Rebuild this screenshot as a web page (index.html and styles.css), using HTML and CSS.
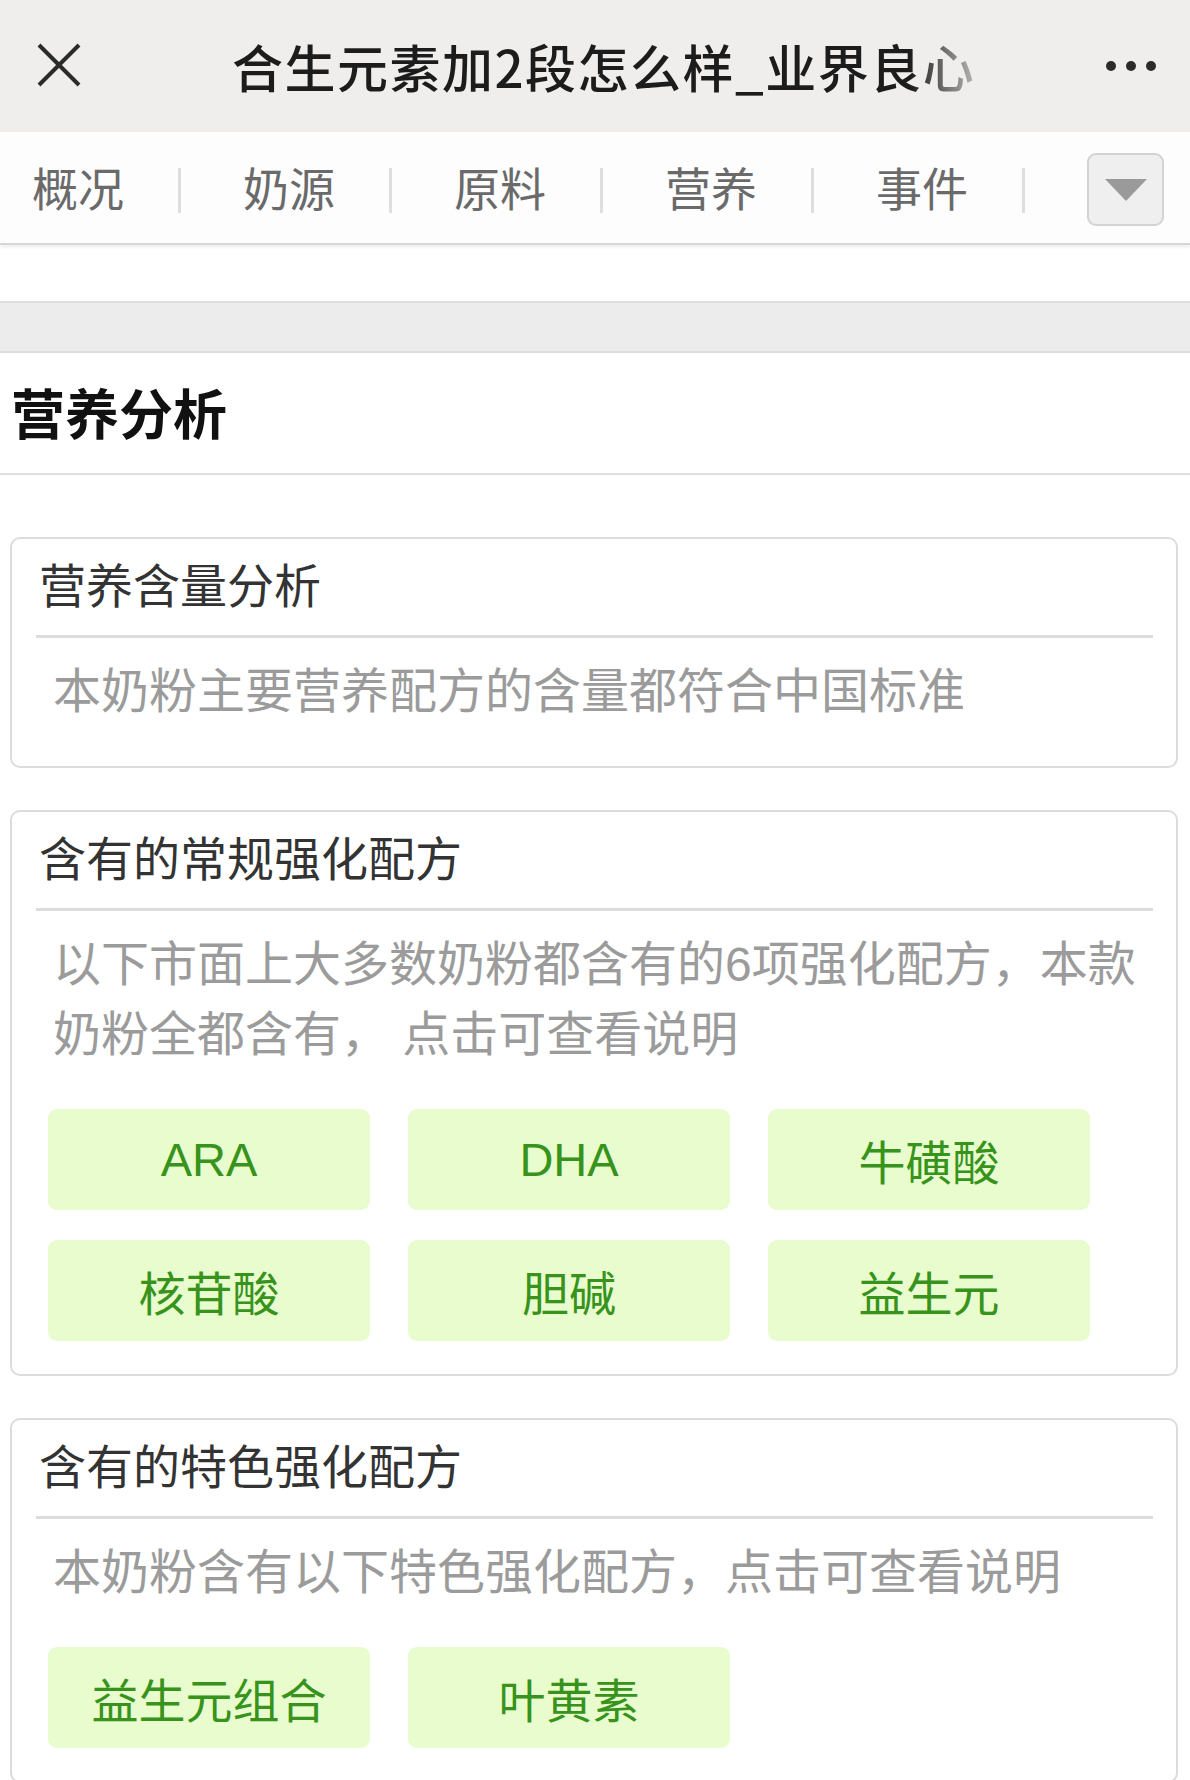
FILE: index.html
```html
<!DOCTYPE html>
<html lang="zh-CN">
<head>
<meta charset="utf-8">
<title>合生元素加2段怎么样</title>
<link rel="stylesheet" href="styles.css">
</head>
<body>
<header class="topbar">
  <div class="close">
    <svg width="44" height="44" viewBox="0 0 44 44"><path d="M2 2 L42 42 M42 2 L2 42" stroke="#2b2b2b" stroke-width="4" fill="none"/></svg>
  </div>
  <div class="title">合生元素加2段怎么样_业界良心</div>
  <div class="more">
    <svg width="52" height="12" viewBox="0 0 52 12"><circle cx="6" cy="6" r="5" fill="#2b2b2b"/><circle cx="26" cy="6" r="5" fill="#2b2b2b"/><circle cx="46" cy="6" r="5" fill="#2b2b2b"/></svg>
  </div>
</header>

<nav class="tabs">
  <div class="tab"><span class="tab-text">概况</span><span class="sep"></span></div>
  <div class="tab"><span class="tab-text">奶源</span><span class="sep"></span></div>
  <div class="tab"><span class="tab-text">原料</span><span class="sep"></span></div>
  <div class="tab"><span class="tab-text">营养</span><span class="sep"></span></div>
  <div class="tab"><span class="tab-text">事件</span><span class="sep"></span></div>
  <div class="drop">
    <svg width="42" height="22" viewBox="0 0 42 22"><path d="M0 0 H42 L21 22 Z" fill="#9a9a9a"/></svg>
  </div>
</nav>

<div class="spacer"></div>
<div class="band"></div>

<h2 class="section-title">营养分析</h2>

<main class="cards">
  <section class="card">
    <h3 class="card-title">营养含量分析</h3>
    <p class="card-desc">本奶粉主要营养配方的含量都符合中国标准</p>
  </section>

  <section class="card">
    <h3 class="card-title">含有的常规强化配方</h3>
    <p class="card-desc">以下市面上大多数奶粉都含有的6项强化配方，本款奶粉全都含有， 点击可查看说明</p>
    <div class="chips">
      <div class="chip">ARA</div>
      <div class="chip">DHA</div>
      <div class="chip">牛磺酸</div>
      <div class="chip">核苷酸</div>
      <div class="chip">胆碱</div>
      <div class="chip">益生元</div>
    </div>
  </section>

  <section class="card">
    <h3 class="card-title">含有的特色强化配方</h3>
    <p class="card-desc">本奶粉含有以下特色强化配方，点击可查看说明</p>
    <div class="chips">
      <div class="chip">益生元组合</div>
      <div class="chip">叶黄素</div>
    </div>
  </section>
</main>
</body>
</html>
```

FILE: styles.css
```css
* { box-sizing: border-box; }
html, body {
  margin: 0;
  padding: 0;
  background: #ffffff;
  font-family: "Liberation Sans", "Noto Sans CJK SC", sans-serif;
}

.topbar {
  height: 132px;
  background: #efeeec;
  display: flex;
  align-items: center;
}
.close {
  width: 44px;
  height: 44px;
  margin-left: 37px;
  margin-top: -2px;
}
.close svg { display: block; }
.title {
  margin-left: 151px;
  width: 745px;
  white-space: nowrap;
  font-family: "Noto Sans CJK SC", sans-serif;
  font-size: 51px;
  font-weight: 500;
  letter-spacing: 1.5px;
  color: #1c1c1c;
  line-height: 60px;
  -webkit-mask-image: linear-gradient(to right, #000 91%, rgba(0,0,0,0.25) 100%);
  mask-image: linear-gradient(to right, #000 91%, rgba(0,0,0,0.25) 100%);
}
.more {
  margin-left: auto;
  margin-right: 33px;
  height: 12px;
}
.more svg { display: block; }

.tabs {
  height: 113px;
  background: #fdfdfd;
  display: flex;
  align-items: center;
  padding-left: 32px;
  border-bottom: 2px solid #d6d6d6;
  box-shadow: 0 2px 3px rgba(0,0,0,0.08);
  position: relative;
  z-index: 1;
}
.tab {
  display: flex;
  align-items: center;
  width: 211px;
}
.tab-text {
  font-family: "Noto Sans CJK SC", sans-serif;
  font-size: 46px;
  color: #6a6a6a;
  width: 93px;
  line-height: 56px;
  white-space: nowrap;
  margin-top: -4px;
}
.sep {
  width: 3px;
  height: 45px;
  background: #dedede;
  margin-left: 53px;
  margin-top: 6px;
}
.drop {
  width: 77px;
  height: 73px;
  border: 2px solid #d3d3d3;
  border-radius: 9px;
  background: #efefef;
  display: flex;
  align-items: center;
  justify-content: center;
  margin-top: 4px;
}
.drop svg { display: block; }

.spacer { height: 56px; background: #fff; }
.band {
  height: 52px;
  background: #ececec;
  border-top: 2px solid #dedede;
  border-bottom: 2px solid #dedede;
}

.section-title {
  margin: 0;
  height: 122px;
  padding-left: 11px;
  padding-bottom: 4px;
  display: flex;
  align-items: center;
  font-family: "Noto Sans CJK SC", sans-serif;
  font-size: 54px;
  font-weight: 700;
  color: #111;
  border-bottom: 2px solid #dedede;
}

.cards {
  padding: 62px 12px 0 10px;
  display: flex;
  flex-direction: column;
  gap: 42px;
}
.card {
  border: 2px solid #dcdcdc;
  border-radius: 10px;
  padding: 0 23px 0 24px;
  background: #fff;
}
.card-title {
  margin: 0;
  height: 99px;
  padding-left: 3px;
  padding-bottom: 9px;
  display: flex;
  align-items: center;
  font-family: "Noto Sans CJK SC", sans-serif;
  font-size: 47px;
  font-weight: 400;
  color: #333;
  border-bottom: 3px solid #dcdcdc;
}
.card-desc {
  margin: 0;
  padding: 19px 0 39px 17px;
  font-size: 48px;
  line-height: 70px;
  color: #9b9b9b;
}
.chips {
  display: grid;
  grid-template-columns: repeat(3, 322px);
  column-gap: 38px;
  row-gap: 30px;
  padding: 0 0 33px 12px;
}
.chip {
  height: 101px;
  background: #e8fccd;
  border-radius: 9px;
  display: flex;
  align-items: center;
  justify-content: center;
  font-size: 47px;
  color: #37931c;
}
```
